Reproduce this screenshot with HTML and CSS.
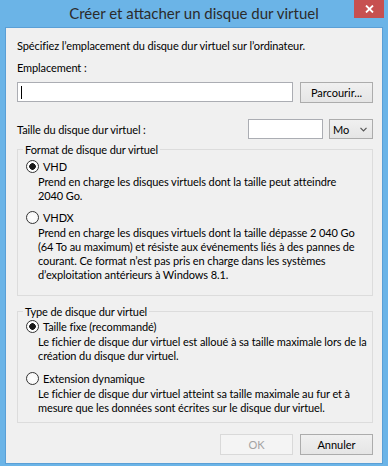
FILE: index.html
```html
<!DOCTYPE html>
<html lang="fr">

<head>
  <meta charset="UTF-8">
  <meta name="viewport" content="width=device-width, initial-scale=1.0">
  <title>Créer et attacher un disque dur virtuel</title>
  <link rel="stylesheet" href="styles.css">
</head>

<body>
  <div class="window">
    <div class="titlebar">
      <h1 class="title">Créer et attacher un disque dur virtuel</h1>
      <button class="close-button" aria-label="Fermer">
        <svg width="9" height="8" viewBox="0 0 9 8">
          <path d="M1 0.5 L8 7.5 M8 0.5 L1 7.5" stroke="#fff" stroke-width="1.8" fill="none" />
        </svg>
      </button>
    </div>

    <div class="client">
      <p class="intro">Spécifiez l’emplacement du disque dur virtuel sur l’ordinateur.</p>
      <div class="field-label">Emplacement :</div>
      <div class="path-row">
        <div class="textbox path-box"><span class="caret"></span></div>
        <button class="styled-button">Parcourir...</button>
      </div>

      <div class="size-row">
        <span class="size-label">Taille du disque dur virtuel :</span>
        <div class="textbox size-box"></div>
        <div class="combo">
          <span>Mo</span>
          <svg width="7" height="5" viewBox="0 0 7 5">
            <path d="M0.5 0.8 L3.5 3.8 L6.5 0.8" stroke="#555" stroke-width="1.2" fill="none" />
          </svg>
        </div>
      </div>

      <fieldset class="group format-group">
        <legend>Format de disque dur virtuel</legend>
        <div class="option"><span class="radio checked"></span>VHD</div>
        <p class="desc">Prend en charge les disques virtuels dont la taille peut atteindre<br>2040 Go.</p>
        <div class="option second"><span class="radio"></span>VHDX</div>
        <p class="desc">Prend en charge les disques virtuels dont la taille dépasse 2 040 Go<br>(64 To au maximum) et résiste aux événements liés à des pannes de<br>courant. Ce format n’est pas pris en charge dans les systèmes<br>d’exploitation antérieurs à Windows 8.1.</p>
      </fieldset>

      <fieldset class="group type-group">
        <legend>Type de disque dur virtuel</legend>
        <div class="option"><span class="radio checked"></span>Taille fixe (recommandé)</div>
        <p class="desc">Le fichier de disque dur virtuel est alloué à sa taille maximale lors de la<br>création du disque dur virtuel.</p>
        <div class="option second"><span class="radio"></span>Extension dynamique</div>
        <p class="desc">Le fichier de disque dur virtuel atteint sa taille maximale au fur et à<br>mesure que les données sont écrites sur le disque dur virtuel.</p>
      </fieldset>

      <div class="actions">
        <button class="styled-button" disabled>OK</button>
        <button class="styled-button">Annuler</button>
      </div>
    </div>
  </div>
</body>

</html>
```

FILE: styles.css
```css
body {
  margin: 0;
  font-family: Lato, 'Liberation Sans', sans-serif;
  font-size: 11px;
  letter-spacing: -0.1px;
  color: #000;
  background-color: #fff;
}

.window {
  width: 388px;
  height: 466px;
  box-sizing: border-box;
  padding: 0 5px 2px;
  background-color: #6bb4e7;
  display: flex;
  flex-direction: column;
}

.titlebar {
  height: 27px;
  margin: 0 -5px;
  display: grid;
  grid-template-columns: 1fr auto 1fr;
  align-items: start;
}

.title {
  grid-column: 2;
  margin: 0;
  font-size: 15px;
  font-weight: normal;
  letter-spacing: 0;
  line-height: 27px;
  color: #2b2b2b;
}

.close-button {
  grid-column: 3;
  justify-self: end;
  margin-right: 4px;
  width: 30px;
  height: 18px;
  padding: 0;
  border: none;
  background-color: #c75050;
  display: flex;
  align-items: center;
  justify-content: center;
}

.client {
  flex: 1;
  background-color: #f0f0f0;
  border: 1px solid #5a9fd6;
  padding: 10px 9px 0 11px;
}

.intro {
  margin: 0;
  line-height: 15px;
}

.field-label {
  margin-top: 7px;
  line-height: 15px;
}

.path-row {
  display: flex;
  gap: 7px;
  margin-top: 7px;
  height: 20px;
}

.textbox {
  box-sizing: border-box;
  background-color: #fff;
  border: 1px solid #abadb3;
}

.path-box {
  flex: 1;
  padding: 3px 3px;
}

.caret {
  display: block;
  width: 1px;
  height: 13px;
  background-color: #000;
}

.styled-button {
  width: 73px;
  height: 21px;
  box-sizing: border-box;
  padding: 0;
  border: 1px solid #acacac;
  background: linear-gradient(#f0f0f0, #e5e5e5);
  font: inherit;
  color: #000;
}

.styled-button:disabled {
  border-color: #d9d9d9;
  background: #f4f4f4;
  color: #a3a3a3;
}

.size-row {
  display: flex;
  align-items: center;
  margin-top: 17px;
  height: 20px;
}

.size-label {
  flex: 1;
}

.size-box {
  width: 75px;
  height: 20px;
}

.combo {
  width: 44px;
  height: 20px;
  margin-left: 6px;
  box-sizing: border-box;
  padding: 0 5px 0 3px;
  border: 1px solid #acacac;
  background: linear-gradient(#f0f0f0, #e5e5e5);
  display: flex;
  align-items: center;
  justify-content: space-between;
}

.group {
  margin: 3px 0 0;
  padding: 0 8px 13px;
  border: 1px solid #dcdcdc;
  min-width: 0;
}

.group legend {
  margin-left: -3px;
  padding: 0 2px;
  line-height: 15px;
}

.type-group {
  margin-top: 8px;
  padding-bottom: 7px;
}

.option {
  display: flex;
  align-items: center;
  gap: 4px;
  line-height: 15px;
  margin-top: 2px;
}

.type-group .option {
  margin-top: 0;
}

.option.second,
.type-group .option.second {
  margin-top: 7px;
}

.type-group .option.second {
  margin-top: 8px;
}

.radio {
  width: 13px;
  height: 13px;
  box-sizing: border-box;
  border: 1px solid #333;
  border-radius: 50%;
  background: radial-gradient(circle, #fff 0, #f4f4f4 100%);
}

.radio.checked {
  background: radial-gradient(circle, #1a1a1a 0 3px, #fff 3.6px);
}

.desc {
  margin: 1px 0 0 12px;
  line-height: 14px;
  white-space: nowrap;
}

.actions {
  display: flex;
  justify-content: flex-end;
  gap: 7px;
  margin-top: 11px;
}
```
